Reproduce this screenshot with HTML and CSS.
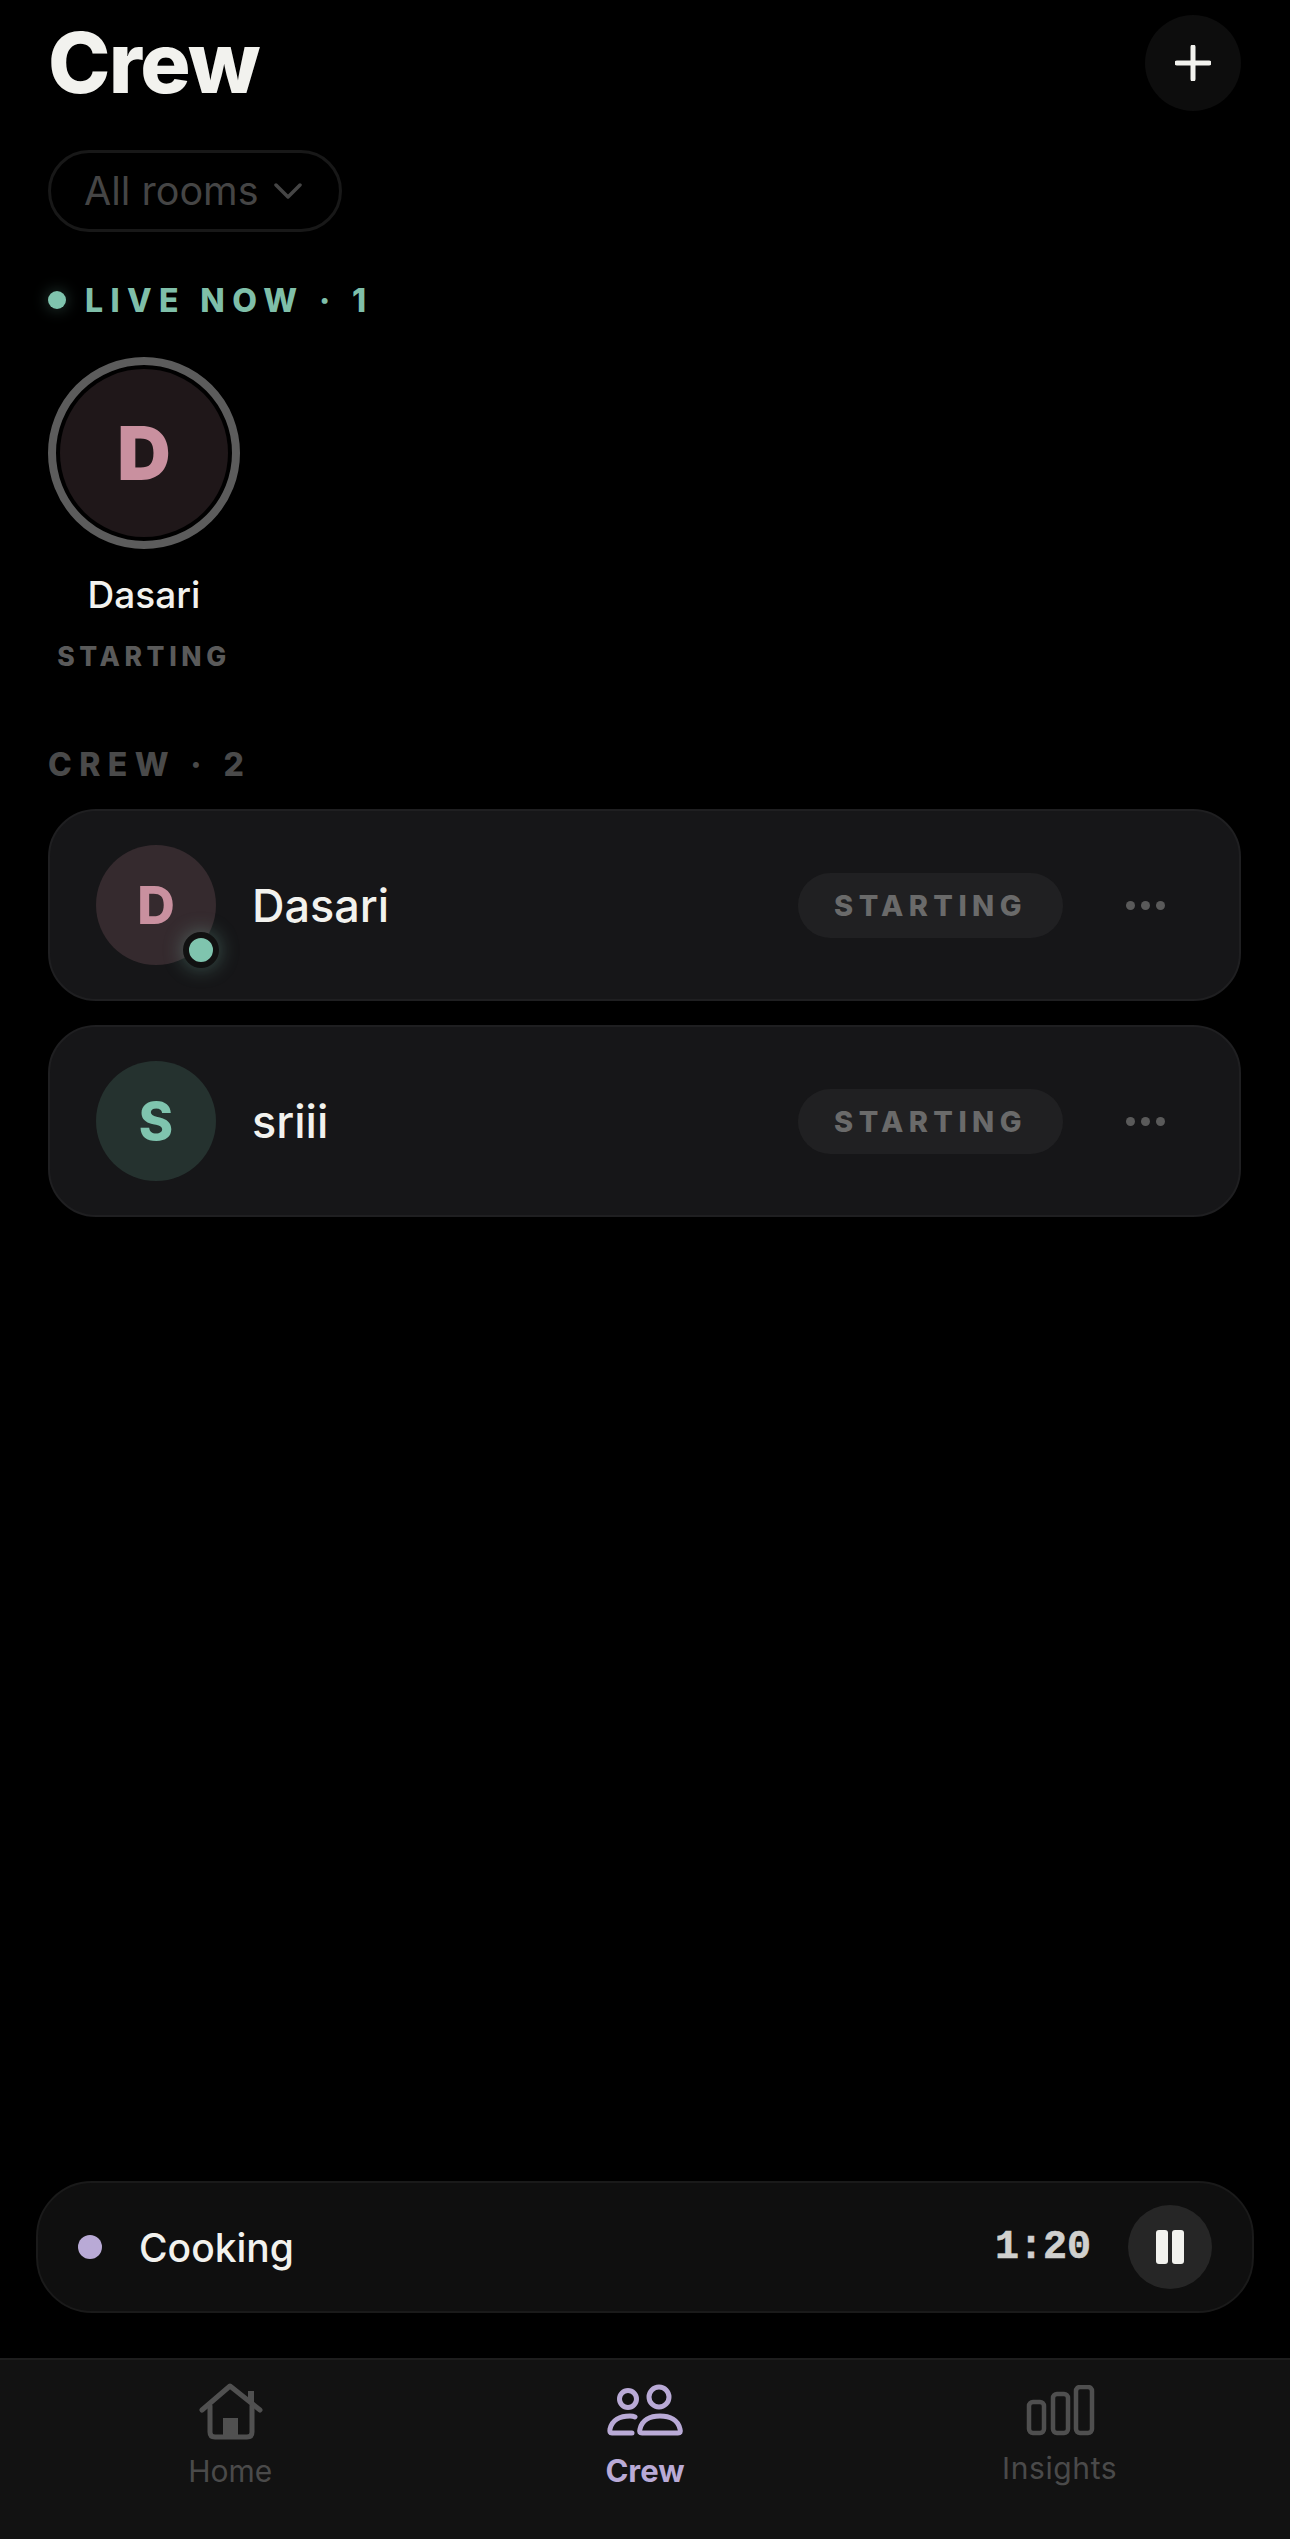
FILE: index.html
```html
<!DOCTYPE html>
<html lang="en">

<head>
	<meta charset="UTF-8">
	<meta name="viewport" content="width=device-width, initial-scale=1.0">
	<title>Crew</title>
	<link rel="stylesheet" href="styles.css">
</head>

<body>
	<div class="screen">
		<main class="content">
			<header class="top">
				<h1 class="title">Crew</h1>
				<button type="button" class="add" aria-label="Add">
					<svg width="36" height="36" viewBox="0 0 36 36">
						<path d="M18 2V34M2 18H34" fill="none" stroke="#f2f2ee" stroke-width="5" stroke-linecap="round" />
					</svg>
				</button>
			</header>

			<button type="button" class="filter">
				<span>All rooms</span>
				<svg width="28" height="16" viewBox="0 0 28 16">
					<path d="M2 2L14 14L26 2" fill="none" stroke="#454545" stroke-width="3.5" stroke-linecap="round" stroke-linejoin="round" />
				</svg>
			</button>

			<h2 class="live-head"><span class="live-dot"></span>LIVE NOW · 1</h2>

			<div class="live-item">
				<div class="live-ring"><div class="live-avatar">D</div></div>
				<div class="live-name">Dasari</div>
				<div class="live-status">STARTING</div>
			</div>

			<h2 class="crew-head">CREW · 2</h2>

			<section class="card">
				<div class="avatar avatar-pink">D<span class="online"></span></div>
				<div class="card-name">Dasari</div>
				<div class="pill">STARTING</div>
				<div class="dots"><i></i><i></i><i></i></div>
			</section>

			<section class="card">
				<div class="avatar avatar-green">S</div>
				<div class="card-name">sriii</div>
				<div class="pill">STARTING</div>
				<div class="dots"><i></i><i></i><i></i></div>
			</section>
		</main>

		<div class="player">
			<span class="player-dot"></span>
			<span class="player-name">Cooking</span>
			<span class="player-time">1:20</span>
			<button type="button" class="pause" aria-label="Pause"><i></i><i></i></button>
		</div>

		<nav class="tabs">
			<a class="tab tab-home">
				<svg width="64" height="58" viewBox="0 0 64 58" fill="none" stroke="#505050" stroke-width="5" stroke-linecap="round" stroke-linejoin="round">
					<path d="M3 28L31 4L61 28" />
					<path d="M11 24V50Q11 55 16 55H48Q53 55 53 50V24" />
					<path d="M52 20V9" stroke-linecap="butt" stroke-width="6" />
					<rect x="24" y="36" width="15" height="18" fill="#505050" stroke="none" />
				</svg>
				<span>Home</span>
			</a>
			<a class="tab tab-on">
				<svg width="80" height="56" viewBox="0 0 80 56" fill="none" stroke="#b9aad6" stroke-width="5" stroke-linecap="round" stroke-linejoin="round">
					<circle cx="22" cy="17" r="8.5" />
					<circle cx="53" cy="15" r="10" />
					<path d="M29 35C27 34 26 34 24 34C14 34 6 38 4 47C3.5 50 4 51 6 51H26" />
					<path d="M36 51C34 51 33 50 34 47C36 38 44 34 54 34C64 34 72 38 74 47C75 50 74 51 72 51Z" />
				</svg>
				<span>Crew</span>
			</a>
			<a class="tab tab-low">
				<svg width="70" height="52" viewBox="0 0 70 52" fill="none" stroke="#4f4f4f" stroke-width="4.5">
					<rect x="4" y="17" width="15" height="31" rx="4" />
					<rect x="28" y="9" width="15" height="39" rx="4" />
					<rect x="51" y="2" width="16" height="46" rx="4" />
				</svg>
				<span>Insights</span>
			</a>
		</nav>
	</div>
</body>
</html>
```

FILE: styles.css
```css
* {
	box-sizing: border-box;
}

body {
	margin: 0;
	background-color: #000;
	font-family: Inter, "Liberation Sans", sans-serif;
	color: #f2f2ee;
}

button {
	font-family: inherit;
	padding: 0;
}

h1,
h2 {
	margin: 0;
}

.screen {
	display: flex;
	flex-direction: column;
	width: 1290px;
	height: 2539px;
	overflow: hidden;
}

.content {
	flex: 1;
	padding: 15px 49px 0 48px;
}

/* header */
.top {
	display: flex;
	align-items: center;
	justify-content: space-between;
	height: 96px;
}

.title {
	font-size: 84px;
	font-weight: 850;
	letter-spacing: -1.6px;
	line-height: 96px;
}

.add {
	display: flex;
	align-items: center;
	justify-content: center;
	width: 96px;
	height: 96px;
	background-color: #0d0d0d;
	border: none;
	border-radius: 50%;
}

.filter {
	display: flex;
	align-items: center;
	gap: 15px;
	width: 294px;
	height: 82px;
	margin-top: 39px;
	padding: 0 33px;
	background: none;
	border: 3px solid #181818;
	border-radius: 41px;
	color: #454545;
	font-size: 39.5px;
}

/* live now */
.live-head {
	display: flex;
	align-items: center;
	gap: 19px;
	height: 40px;
	margin-top: 48px;
	color: #7fbfa9;
	font-size: 32px;
	font-weight: 800;
	letter-spacing: 7.4px;
}

.live-dot {
	width: 18px;
	height: 18px;
	background-color: #7fc4ae;
	border-radius: 50%;
	box-shadow: 0 0 16px rgba(127, 196, 174, 0.35);
}

.live-item {
	display: flex;
	flex-direction: column;
	align-items: center;
	width: 192px;
	margin-top: 37px;
}

.live-ring {
	width: 192px;
	height: 192px;
	padding: 4px;
	border: 8px solid #5c5c5c;
	border-radius: 50%;
}

.live-avatar {
	display: flex;
	align-items: center;
	justify-content: center;
	width: 100%;
	height: 100%;
	background-color: #1f1719;
	border-radius: 50%;
	color: #c9909f;
	font-size: 74px;
	font-weight: 900;
}

.live-name {
	margin-top: 24px;
	font-size: 37px;
	font-weight: 500;
	line-height: 44px;
	white-space: nowrap;
}

.live-status {
	margin-top: 23px;
	color: #5a5a5a;
	font-size: 26.5px;
	font-weight: 800;
	letter-spacing: 4.6px;
	line-height: 32px;
	white-space: nowrap;
}

/* crew list */
.crew-head {
	margin-top: 73px;
	color: #4a4a4a;
	font-size: 32px;
	font-weight: 800;
	letter-spacing: 7.4px;
	line-height: 40px;
}

.card {
	display: flex;
	align-items: center;
	height: 192px;
	margin-top: 24px;
	padding: 0 74px 0 46px;
	background-color: #161618;
	border: 2px solid #1f1f21;
	border-radius: 48px;
}

.avatar {
	position: relative;
	display: flex;
	align-items: center;
	justify-content: center;
	flex: none;
	width: 120px;
	height: 120px;
	border-radius: 50%;
	font-size: 52px;
	font-weight: 800;
}

.avatar-pink {
	background-color: #352a2e;
	color: #c9909f;
}

.avatar-green {
	background-color: #25322f;
	color: #7fc4ae;
}

.online {
	position: absolute;
	right: -3px;
	bottom: -3px;
	width: 36px;
	height: 36px;
	background-color: #7fc4ae;
	border: 6px solid #111;
	border-radius: 50%;
	box-shadow: 0 0 20px rgba(127, 196, 174, 0.4);
}

.card-name {
	flex: 1;
	margin-left: 36px;
	font-size: 45px;
	font-weight: 500;
}

.pill {
	display: flex;
	align-items: center;
	justify-content: center;
	width: 265px;
	height: 65px;
	background-color: #202022;
	border-radius: 33px;
	color: #6a6a6a;
	font-size: 29px;
	font-weight: 800;
	letter-spacing: 5.4px;
}

.dots {
	display: flex;
	gap: 6px;
	margin-left: 63px;
}

.dots i {
	width: 9px;
	height: 9px;
	background-color: #5a5a5a;
	border-radius: 50%;
}

/* now playing */
.player {
	display: flex;
	align-items: center;
	height: 132px;
	margin: 0 36px 45px;
	padding: 0 40px;
	background-color: #0f0f0f;
	border: 2px solid #1a1a1a;
	border-radius: 56px;
}

.player-dot {
	width: 24px;
	height: 24px;
	background-color: #b9aad6;
	border-radius: 50%;
}

.player-name {
	flex: 1;
	margin-left: 37px;
	font-size: 39px;
	font-weight: 500;
}

.player-time {
	color: #d0d0ce;
	font-family: "Liberation Mono", monospace;
	font-size: 40px;
	font-weight: 700;
	-webkit-text-stroke: 0.6px #d0d0ce;
}

.pause {
	display: flex;
	align-items: center;
	justify-content: center;
	gap: 4px;
	width: 84px;
	height: 84px;
	margin-left: 37px;
	background-color: #262626;
	border: none;
	border-radius: 50%;
}

.pause i {
	width: 12px;
	height: 34px;
	background-color: #f2f2ee;
	border-radius: 3px;
}

/* bottom tabs */
.tabs {
	display: grid;
	grid-template-columns: repeat(3, 1fr);
	height: 181px;
	padding: 0 23px;
	background-color: #121212;
	border-top: 2px solid #1e1e1e;
}

.tab {
	display: flex;
	flex-direction: column;
	align-items: center;
	gap: 11px;
	padding-top: 22px;
	color: #4a4a4a;
	font-size: 30px;
	line-height: 40px;
}

.tab-home svg {
	margin-left: 2px;
}

.tab-on {
	color: #b9aad6;
	font-size: 31px;
	font-weight: 700;
}

.tab-on svg {
	margin-left: 3px;
}

.tab-on span {
	margin-top: 2px;
}

.tab-low svg {
	margin-top: 3px;
}

.tab-low span {
	letter-spacing: 0.6px;
}
```
